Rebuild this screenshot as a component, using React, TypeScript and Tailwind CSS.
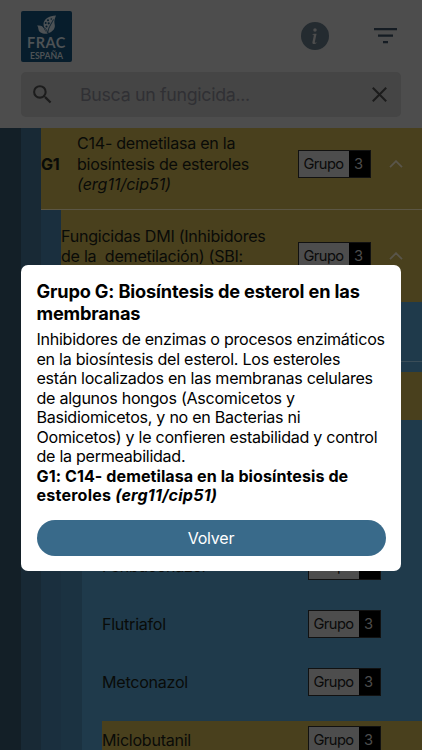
import React from "react";
import { MdSearch } from "react-icons/md";
import { BsInfoCircleFill } from "react-icons/bs";

function GroupTag() {
  return (
    <div className="flex h-[28px] w-[73px] shrink-0 border border-[#111] bg-[#4d4d4d] text-[14.7px] leading-[27px]">
      <span className="w-[50px] pr-[1px] text-center tracking-[-0.55px] text-[#0a0a0a]">Grupo</span>
      <span className="flex-1 bg-black pr-[2px] text-center text-[#4d4d4d]">3</span>
    </div>
  );
}

function Chevron() {
  return (
    <svg className="shrink-0" width="14" height="8" viewBox="0 0 14 8" fill="none" stroke="#59554a" strokeWidth="1.8">
      <path d="M1 7.2 7 1.2l6 6" />
    </svg>
  );
}

function Logo() {
  return (
    <div className="flex h-[51px] w-[51px] flex-col items-center rounded-[2px] bg-[#071d2c] pt-[4px] text-[#4d5255]">
      <svg className="shrink-0" width="20" height="20" viewBox="0 0 20 20">
        <path d="M19 .5C12 1 6.500 4 6.500 9c0 4 2 7 4 9.500C16 17 19 13 17.500 8.500 17 5.500 18 3 19 .5Z" fill="#4d5255" />
        <path d="M0 10.500c4-.5 6 .5 7 3 .8 2 2 3.500 4 5-5 1-9-1-9.500-4-.2-1.500-.5-3-1.500-4Z" fill="#4d5255" />
        <path d="M11 18.500c-.5-5 3-9 5.500-14" stroke="#071d2c" strokeWidth=".9" fill="none" />
        <path d="M11 18.500C10 15 8 12.500 5.500 11.500" stroke="#071d2c" strokeWidth=".7" fill="none" />
        <g fill="#071d2c">
          <circle cx="11" cy="5.300" r="1" />
          <circle cx="14.300" cy="4" r=".8" />
          <circle cx="8.700" cy="8" r="1" />
          <circle cx="11.700" cy="8.300" r="1.100" />
          <circle cx="9.500" cy="11.500" r="1" />
        </g>
      </svg>
      <span className="mt-[1px] h-[14px] font-['Lato'] text-[14.5px] font-bold leading-[14px] tracking-[0.5px]">FRAC</span>
      <span className="mt-[1px] h-[9px] font-['Lato'] text-[8.7px] font-bold leading-[10px] tracking-[-0.1px]">ESPAÑA</span>
    </div>
  );
}

function Line({ children, className = "" }: { children: React.ReactNode; className?: string }) {
  return <span className={`block whitespace-pre ${className}`}>{children}</span>;
}

function Fungicide({ name }: { name: string }) {
  return (
    <div className="flex h-[58px] items-center justify-between pl-[20px] pr-[41px]">
      <span>{name}</span>
      <GroupTag />
    </div>
  );
}

export default function App() {
  return (
    <div className="relative h-[750px] w-full overflow-hidden bg-[#4d4d4d] font-['Inter','Liberation_Sans',sans-serif] text-[16.1px] leading-[20.4px] tracking-[-0.27px] text-[#090b08]">
      <header className="h-[128px] px-[21px] pt-[11px]">
        <div className="flex h-[51px] items-center">
          <Logo />
          <BsInfoCircleFill className="ml-auto mt-[-1px]" size={28} color="#242b30" />
          <svg className="ml-[45px] mr-[4px] mt-[-1px]" width="23" height="16" viewBox="0 0 23 16" fill="#151c23">
            <path d="M0 0h23v2.300H0zM4 6.500h15v2.300H4zM9 13h5v2.300H9z" />
          </svg>
        </div>
        <div className="mt-[10px] flex h-[45px] items-center rounded-[5px] bg-[#454545] pl-[9px] pr-[14px]">
          <MdSearch size={25} color="#1c1c1c" />
          <span className="ml-[25px] mt-[1px] text-[17.8px] tracking-[-0.31px] text-[#303034]">Busca un fungicida...</span>
          <svg className="ml-auto" width="15" height="15" viewBox="0 0 15 15" stroke="#1c1c1c" strokeWidth="2">
            <path d="m.8.8 13.400 13.400M14.200.8.8 14.200" />
          </svg>
        </div>
      </header>

      <main className="flex h-[622px]">
        <div className="w-[21px] bg-[#131f27]" />
        <div className="w-[20px] bg-[#182935]" />
        <div className="min-w-0 flex-1">
          <div className="flex h-[82px] items-center border-b border-[#5b5644] bg-[#49401d] pr-[19px]">
            <b className="mt-[-9px] w-[36px]">G1</b>
            <div className="mt-[-9px]">
              <Line>C14- demetilasa en la</Line>
              <Line>biosíntesis de esteroles</Line>
              <Line className="italic tracking-[-0.05px]">(erg11/cip51)</Line>
            </div>
            <div className="mt-[-10px] ml-auto flex items-center gap-[18px]">
              <GroupTag />
              <Chevron />
            </div>
          </div>
          <div className="flex h-[540px]">
            <div className="w-[20px] bg-[#1a2f3e]" />
            <div className="min-w-0 flex-1">
              <div className="flex h-[92px] items-center bg-[#49401d] pr-[19px]">
                <div className="mt-[1px]">
                  <Line>Fungicidas DMI (Inhibidores</Line>
                  <Line>{"de la  demetilación) (SBI:"}</Line>
                  <Line>Clase I)</Line>
                </div>
                <div className="ml-auto flex items-center gap-[18px]">
                  <GroupTag />
                  <Chevron />
                </div>
              </div>
              <div className="flex h-[448px]">
                <div className="w-[21px] bg-[#1b3241]" />
                <div className="min-w-0 flex-1 bg-[#1f3a4b]">
                  <div className="h-[60px] border-b border-[#3a4d58]" />
                  <div className="mt-[10px] h-[48px] bg-[#49401d]" />
                  <div className="h-[117px]" />
                  <Fungicide name="Fenbuconazol" />
                  <Fungicide name="Flutriafol" />
                  <Fungicide name="Metconazol" />
                  <div className="mt-[10px] ml-[20px] flex h-[38px] items-center justify-between bg-[#49401d] pr-[41px]">
                    <span>Miclobutanil</span>
                    <GroupTag />
                  </div>
                </div>
              </div>
            </div>
          </div>
        </div>
      </main>

      <section className="absolute left-[21px] top-[265px] h-[306px] w-[380px] rounded-[7px] bg-white px-[15.500px] pt-[15px] text-black">
        <h1 className="text-[18.2px] font-bold leading-[22px] tracking-[-0.16px]">
          <Line>Grupo G: Biosíntesis de esterol en las</Line>
          <Line>membranas</Line>
        </h1>
        <div className="mt-[6px] text-[16.1px] leading-[19.5px] tracking-[-0.28px]">
          <Line>Inhibidores de enzimas o procesos enzimáticos</Line>
          <Line>en la biosíntesis del esterol. Los esteroles</Line>
          <Line>están localizados en las membranas celulares</Line>
          <Line>de algunos hongos (Ascomicetos y</Line>
          <Line>Basidiomicetos, y no en Bacterias ni</Line>
          <Line>Oomicetos) y le confieren estabilidad y control</Line>
          <Line>de la permeabilidad.</Line>
          <Line className="font-bold tracking-[0.06px]">G1: C14- demetilasa en la biosíntesis de</Line>
          <Line className="font-bold tracking-[0.2px]">esteroles <i>(erg11/cip51)</i></Line>
        </div>
        <button className="mt-[14px] block h-[36px] w-full rounded-full bg-[#396a8a] pt-[1px] text-[16px] tracking-[-0.2px] text-white">Volver</button>
      </section>
    </div>
  );
}
